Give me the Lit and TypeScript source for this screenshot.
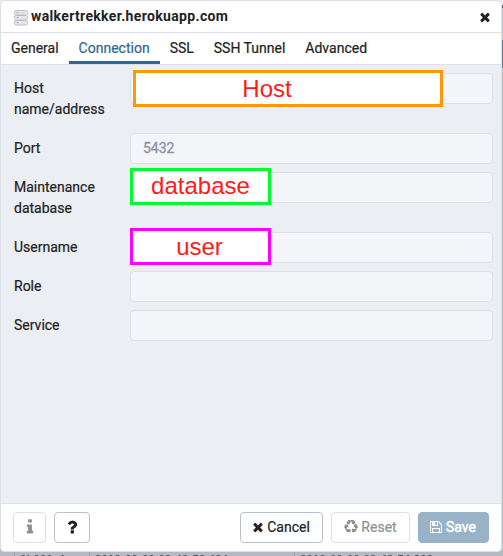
import { LitElement, html, css, svg } from "lit";
import { customElement, property } from "lit/decorators.js";

const ICONS: Record<string, string> = {
  times:
    "M1490 1322q0 40-28 68l-136 136q-28 28-68 28t-68-28l-294-294-294 294q-28 28-68 28t-68-28l-136-136q-28-28-28-68t28-68l294-294-294-294q-28-28-28-68t28-68l136-136q28-28 68-28t68 28l294 294 294-294q28-28 68-28t68 28l136 136q28 28 28 68t-28 68l-294 294 294 294q28 28 28 68z",
  info:
    "M1216 1344v128q0 26-19 45t-45 19h-512q-26 0-45-19t-19-45v-128q0-26 19-45t45-19h64v-384h-64q-26 0-45-19t-19-45v-128q0-26 19-45t45-19h384q26 0 45 19t19 45v576h64q26 0 45 19t19 45zm-128-1152v192q0 26-19 45t-45 19h-256q-26 0-45-19t-19-45v-192q0-26 19-45t45-19h256q26 0 45 19t19 45z",
  question:
    "M1088 1256v240q0 16-12 28t-28 12h-240q-16 0-28-12t-12-28v-240q0-16 12-28t28-12h240q16 0 28 12t12 28zm316-600q0 54-15.500 101t-35 76.500-55 59.500-57.500 43.500-61 35.500q-41 23-68.500 65t-27.500 67q0 17-12 32.500t-28 15.500h-240q-15 0-25.500-18.500t-10.500-37.500v-45q0-83 65-156.500t143-108.500q59-27 84-56t25-76q0-42-46.500-74t-107.500-32q-65 0-108 29-35 25-107 115-13 16-31 16-12 0-25-8l-164-125q-13-10-15.500-25t5.500-28q160-266 464-266 80 0 161 31t146 83 106 127.500 41 158.500z",
  save:
    "M512 1536h768v-384h-768v384zm896 0h128v-896q0-14-10-38.500t-20-34.500l-281-281q-10-10-34-20t-39-10v416q0 40-28 68t-68 28h-576q-40 0-68-28t-28-68v-416h-128v1280h128v-416q0-40 28-68t68-28h832q40 0 68 28t28 68v416zm-384-928v-320q0-13-9.500-22.500t-22.500-9.500h-192q-13 0-22.500 9.500t-9.500 22.500v320q0 13 9.500 22.500t22.500 9.500h192q13 0 22.500-9.500t9.500-22.500zm640 32v928q0 40-28 68t-68 28h-1344q-40 0-68-28t-28-68v-1344q0-40 28-68t68-28h928q40 0 88 20t76 48l280 280q28 28 48 76t20 88z",
  recycle:
    "M836 1169l-15 368-2 22-420-29q-36-3-67-31.500t-47-65.500q-11-27-14.500-55t4-65 12-55 21.500-64 19-53q78 12 509 28zm-387-586l180 379-147-92q-63 72-111.500 144.500t-72.500 125-39.500 94.500-18.500 63l-4 21-190-357q-17-26-18-56t6-47l8-18q35-63 114-188l-140-86zm1231 517l-188 359q-12 29-36.500 46.500t-43.500 20.500l-18 4q-71 7-219 12l8 164-230-367 211-362 7 173q170 16 283 5t170-33zm-785-924q-47 63-265 435l-317-187-19-12 225-356q20-31 60-45t80-10q24 2 48.500 12t42 21 41.500 33 36 34.500 36 39.500 32 35zm655 307l212 363q18 37 12.500 76t-27.500 74q-13 20-33 37t-38 28-48.500 22-47 16-51.500 14-46 12q-34-72-265-436l313-195zm-143-226l142-83-220 373-419-20 151-86q-34-89-75-166t-75.500-123.500-64.500-80-47-46.500l-17-13 405 1q31-3 58 10.500t39 28.500l11 15q39 61 112 190z",
};

@customElement("fa-icon")
class FaIcon extends LitElement {
  @property() name = "times";

  static styles = css`
    :host { display: inline-flex; width: 14px; height: 14px; flex: none; }
    .glyph { width: 100%; height: 100%; fill: currentColor; overflow: visible; }
  `;

  render() {
    return html`<svg class="glyph" viewBox="0 0 1792 1792"><path d=${ICONS[this.name]}></path></svg>`;
  }
}

interface Field {
  label: string;
  value?: string;
  note?: string;
  kind?: string;
}

const FIELDS: Field[] = [
  { label: "Host name/address", note: "Host", kind: "host" },
  { label: "Port", value: "5432" },
  { label: "Maintenance database", note: "database", kind: "database" },
  { label: "Username", note: "user", kind: "user" },
  { label: "Role" },
  { label: "Service" },
];

const TABS = ["General", "Connection", "SSL", "SSH Tunnel", "Advanced"];

@customElement("app-root")
class AppRoot extends LitElement {
  static styles = css`
    :host {
      display: block;
      position: relative;
      width: 503px;
      height: 556px;
      overflow: hidden;
      background: linear-gradient(#e9ecf1 0 5px, #4d7095 5px 8px, #bfc6d2 8px 40px, #6c7c91 40px 68px, #b9c0cc 68px);
      font: 14px/21px Roboto, "Liberation Sans", sans-serif;
      color: #222;
    }
    * { box-sizing: border-box; }
    .dialog {
      position: relative;
      display: flex;
      flex-direction: column;
      width: 502px;
      height: 552px;
      border: 1px solid #dde0e6;
      border-radius: 5px;
      background: #fff;
      overflow: hidden;
    }
    .title {
      display: flex;
      align-items: center;
      height: 32px;
      padding: 0 9px 0 13px;
      border-bottom: 1px solid #dde0e9;
      font-weight: 700;
    }
    .server { width: 14px; height: 16px; margin: 3px 3px 0 0; }
    .name { flex: 1; letter-spacing: 0.35px; }
    .title fa-icon { margin-top: 1px; }
    .tabs {
      display: flex;
      height: 32px;
      border-bottom: 1px solid #dde0e9;
    }
    .tab { padding: 5px 10px 0; -webkit-text-stroke: 0.2px; }
    .tab.active { color: #326690; border-bottom: 3px solid #326690; }
    .body {
      flex: 1;
      display: flex;
      flex-direction: column;
      gap: 8px;
      padding: 8px 8px 0 13px;
      background: #ebeef3;
    }
    .row { display: flex; align-items: flex-start; }
    .label { width: 116px; padding: 5px 20px 5px 0; -webkit-text-stroke: 0.2px; }
    .field {
      position: relative;
      flex: 1;
      height: 31px;
      padding: 4px 12px;
      border: 1px solid #dde0e6;
      border-radius: 4px;
      background: #f3f5f9;
      color: #8a94a8;
      -webkit-text-stroke: 0.3px;
    }
    .note {
      position: absolute;
      top: -5px;
      left: -1px;
      width: 141px;
      height: 37px;
      border: 3px solid;
      background: #fff;
      display: flex;
      align-items: center;
      justify-content: center;
      font: 24px/28px "Liberation Sans", Arial, sans-serif;
      -webkit-text-stroke: 0;
    }
    .note.host { top: -4px; left: 2px; width: 310px; padding-right: 42px; border-color: #ff9900; }
    .note.database { border-color: #00fa32; padding-bottom: 1px; }
    .note.user { border-color: #ff00ff; padding-right: 2px; }
    .word { color: #ff1a1a; }
    .footer {
      display: flex;
      align-items: flex-start;
      gap: 8px;
      height: 48px;
      padding: 8px 12px 0;
      border-top: 1px solid #dde0e6;
      background: #fff;
    }
    .btn {
      display: flex;
      align-items: center;
      justify-content: center;
      gap: 3px;
      height: 31px;
      padding-bottom: 1px;
      border: 1px solid #bac1cd;
      border-radius: 4px;
      white-space: nowrap;
      -webkit-text-stroke: 0.2px;
    }
    .info { width: 33px; border-color: #dde0e6; color: #909090; }
    .help { width: 36px; }
    .info fa-icon, .help fa-icon { width: 18px; height: 18px; }
    .cancel { width: 83px; margin-left: auto; padding-right: 2px; gap: 2px; }
    .reset { width: 79px; border-color: #dde0e6; color: #909090; }
    .save { width: 71px; padding-right: 2px; border-color: #98b2c7; background: #98b2c7; color: #fff; -webkit-text-stroke: 0.5px; }
    .behind {
      display: grid;
      grid-template-columns: 15px 75px 205px 1fr;
      height: 4px;
      background: #b4bac5;
      color: #50555e;
      font: 700 11px/14px "Liberation Sans", sans-serif;
      letter-spacing: 0.37px;
      white-space: nowrap;
    }
    .cell { padding-left: 5px; height: 4px; border-right: 1px solid #9ba1ad; }
    .cell.last { border-right: 0; }
  `;

  render() {
    return html`
      <div class="dialog">
        <div class="title">
          <svg class="server" viewBox="0 0 14 16">
            ${[0.5, 5.5, 10.5].map(
              (y) => svg`
                <rect x="0.5" y=${y} width="13" height="4.500" rx="1.8" fill="#ececf0" stroke="#b4b4bc" stroke-width="0.9"></rect>
                <path d=${`M2.5 ${y + 2.2}h2.500`} stroke="#9c92cf" stroke-width="0.9"></path>
                <path d=${`M6.500 ${y + 2.2}h5`} stroke="#d0d0d6" stroke-width="0.8"></path>`
            )}
          </svg>
          <span class="name">walkertrekker.herokuapp.com</span>
          <fa-icon name="times"></fa-icon>
        </div>
        <div class="tabs">
          ${TABS.map((t) => html`<div class="tab ${t === "Connection" ? "active" : ""}">${t}</div>`)}
        </div>
        <div class="body">
          ${FIELDS.map(
            (f) => html`<div class="row">
              <div class="label">${f.label}</div>
              <div class="field">${f.value ?? ""}${f.note
                ? html`<div class="note ${f.kind}"><span class="word">${f.note}</span></div>`
                : ""}</div>
            </div>`
          )}
        </div>
        <div class="footer">
          <div class="btn info"><fa-icon name="info"></fa-icon></div>
          <div class="btn help"><fa-icon name="question"></fa-icon></div>
          <div class="btn cancel"><fa-icon name="times"></fa-icon>Cancel</div>
          <div class="btn reset"><fa-icon name="recycle"></fa-icon>Reset</div>
          <div class="btn save"><fa-icon name="save"></fa-icon>Save</div>
        </div>
      </div>
      <div class="behind">
        <div class="cell"></div>
        <div class="cell">9b999e1</div>
        <div class="cell">2019-09-09 09:48:58.484</div>
        <div class="cell last">2019-09-09 09:48:54.909</div>
      </div>
    `;
  }
}
